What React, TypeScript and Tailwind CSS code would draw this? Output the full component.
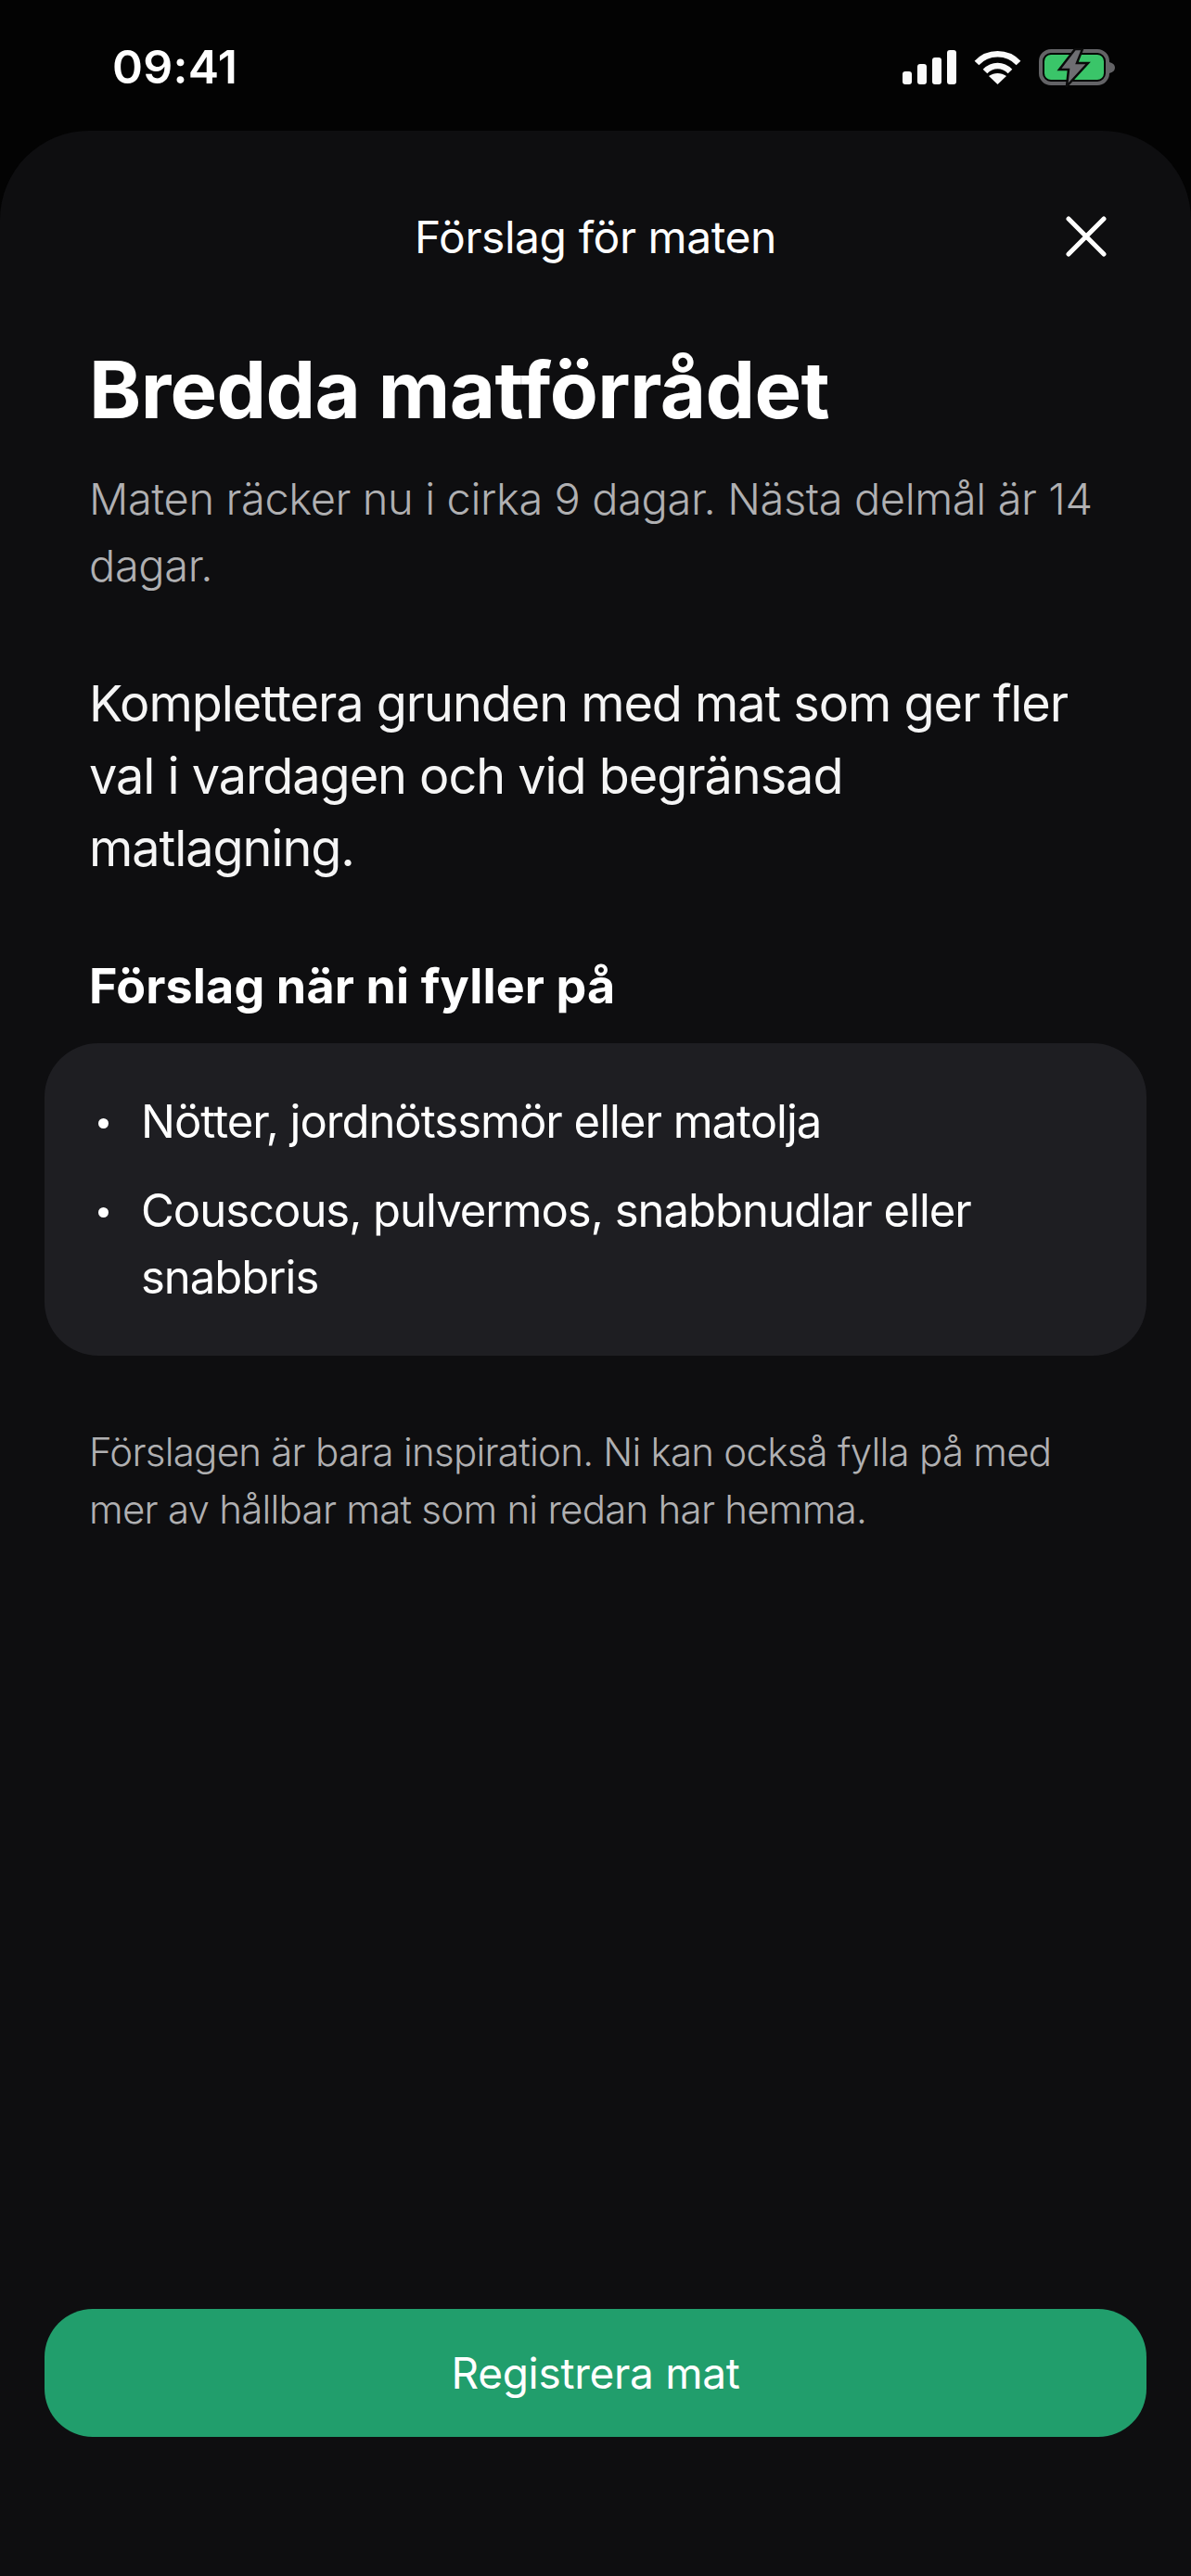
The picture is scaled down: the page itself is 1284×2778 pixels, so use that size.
const font = { fontFamily: '"Inter", "Noto Sans", sans-serif' };

function StatusIcons() {
  return (
    <div className="flex items-start gap-[19px]">
      <svg className="mt-[2px]" width="58" height="37" viewBox="0 0 58 37" fill="#fafafa">
        <rect x="0" y="23" width="10" height="14" rx="3" />
        <rect x="16" y="15" width="10" height="22" rx="3" />
        <rect x="32" y="8" width="10" height="29" rx="3" />
        <rect x="48" y="0" width="10" height="37" rx="3" />
      </svg>
      <svg className="mt-[3px]" width="51" height="36" viewBox="0 0 51 36" fill="none" stroke="#fafafa" strokeWidth="6.5">
        <path d="M3 13 C15 0 36 0 48 13" />
        <path d="M12 22 C20 14 31 14 39 22" />
        <path d="M16 27 C22 23 29 23 35 27 L25.5 36 Z" fill="#fafafa" stroke="none" />
      </svg>
      <svg width="82" height="42" viewBox="0 0 82 42">
        <rect x="2" y="3" width="72" height="35" rx="11" fill="none" stroke="#636366" strokeWidth="4" />
        <rect x="6" y="7" width="64" height="27" rx="7" fill="#3ac569" />
        <path d="M76 15 C80 16 82 18 82 21 C82 24 80 26 76 27Z" fill="#636366" />
        <path d="M39 1 L22 23 H32 L30 41 L53 16 H41 L47 1 Z" fill="#6e6e72" stroke="#0a0a0a" strokeWidth="2.5" />
      </svg>
    </div>
  );
}

function Bullet({ children }: { children: string }) {
  return (
    <li className="flex text-[49px] font-[380] leading-[72px] tracking-[-1px]">
      <span className="ml-[10px] mr-[35px] mt-[32px] size-[11px] shrink-0 rounded-full bg-white" />
      <span>{children}</span>
    </li>
  );
}

export default function App() {
  return (
    <div style={font} className="flex h-[2778px] w-[1284px] flex-col overflow-hidden bg-[#030303] text-white">
      <div className="flex h-[141px] shrink-0 items-start justify-between pl-[121px] pr-[82px] pt-[46px]">
        <span className="text-[50px] font-semibold leading-[52px] tracking-[0.3px]">09:41</span>
        <div className="pt-[6px]">
          <StatusIcons />
        </div>
      </div>
      <div className="flex flex-1 flex-col rounded-t-[96px] bg-[#0e0e10]">
        <div className="relative mt-[70px] flex h-[90px] shrink-0 items-center justify-center">
          <span className="text-[48px] font-normal leading-[60px] tracking-[-0.45px]">Förslag för maten</span>
          <svg className="absolute right-[91px] top-[22px]" width="44" height="44" viewBox="0 0 44 44" stroke="white" strokeWidth="5" strokeLinecap="round">
            <path d="M3 3 L41 41 M41 3 L3 41" />
          </svg>
        </div>
        <div className="flex flex-1 flex-col px-[48px] pb-[150px]">
          <div className="px-[48px]">
            <h1 className="mt-[70px] text-[85px] font-bold leading-[100px] tracking-[-0.6px]">Bredda matförrådet</h1>
            <p className="mt-[31px] text-[47px] font-light leading-[72px] tracking-[-0.4px] text-[#b0b0b2]">
              Maten räcker nu i cirka 9 dagar. Nästa delmål är 14 dagar.
            </p>
            <p className="mt-[74px] text-[54px] font-[380] leading-[78px] tracking-[-1.05px] text-[#f5f5f5]">
              Komplettera grunden med mat som ger fler val i vardagen och vid begränsad matlagning.
            </p>
            <h2 className="mt-[74px] text-[52px] font-bold leading-[72px] tracking-[0.15px]">Förslag när ni fyller på</h2>
          </div>
          <ul className="mt-[25px] flex flex-col gap-[24px] rounded-[58px] bg-[#1e1e22] px-[48px] pb-[48px] pt-[49px]">
            <Bullet>Nötter, jordnötssmör eller matolja</Bullet>
            <Bullet>Couscous, pulvermos, snabbnudlar eller snabbris</Bullet>
          </ul>
          <p className="mt-[73px] px-[48px] text-[42px] font-light leading-[62px] tracking-[-0.75px] text-[#b0b0b2]">
            Förslagen är bara inspiration. Ni kan också fylla på med mer av hållbar mat som ni redan har hemma.
          </p>
          <button className="mt-auto flex h-[138px] w-full items-center justify-center rounded-[52px] bg-[#219e6c] text-[46px] font-normal tracking-[-0.3px]">
            Registrera mat
          </button>
        </div>
      </div>
    </div>
  );
}
